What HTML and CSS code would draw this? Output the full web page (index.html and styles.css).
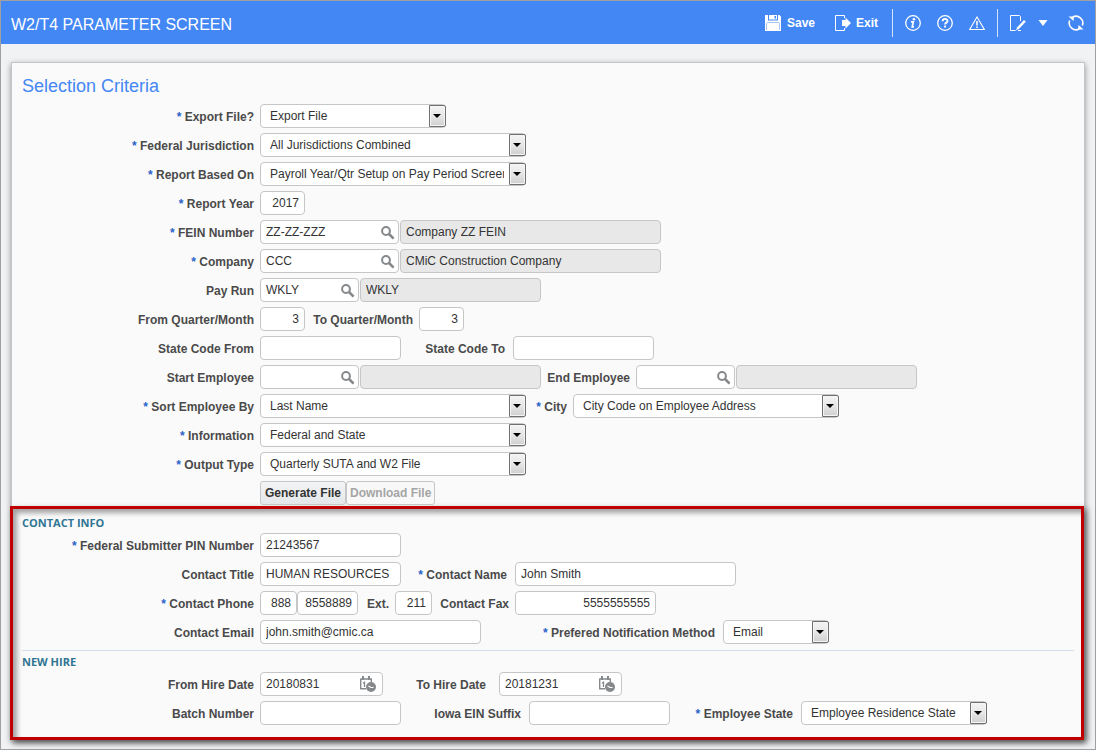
FILE: index.html
```html
<!DOCTYPE html>
<html lang="en">

<head>
    <meta charset="UTF-8">
    <meta name="viewport" content="width=device-width, initial-scale=1.0">
    <title>W2/T4 Parameter Screen</title>
    <link rel="stylesheet" href="styles.css">
</head>

<body>
    <!-- shared icons -->
    <svg class="sprite" aria-hidden="true">
        <symbol id="search" viewBox="0 0 14 14">
            <circle cx="5" cy="5" r="3.9" fill="none" stroke="#85898c" stroke-width="2" />
            <path d="M8 8l4.600 4.600" stroke="#85898c" stroke-width="2.600" />
        </symbol>
        <symbol id="calendar" viewBox="0 0 17 16">
            <path d="M.7 2.500v10.300H6M.7 3h10.600v3" fill="none" stroke="#85898c" stroke-width="1.400" />
            <path d="M2 0h2v4H2zM8 0h2v4H8z" fill="#85898c" />
            <path d="M3 7.200l1.500-1V11" fill="none" stroke="#85898c" stroke-width="1.300" />
            <circle cx="11" cy="11" r="5" fill="#85898c" />
            <path d="M8.500 10l2.500 1.500h2.500" fill="none" stroke="#fff" stroke-width="1.200" />
        </symbol>
    </svg>

    <div class="window">
        <header class="topbar">
            <h1>W2/T4 PARAMETER SCREEN</h1>
            <div class="toolbar">
                <button type="button" class="tool save">
                    <svg width="16" height="16" viewBox="0 0 16 16">
                        <path d="M0 0h3v5.500h10V0h1.500L16 1.500V7H0z" fill="#fff" />
                        <path d="M4 0h8v4.500H4z" fill="#fff" />
                        <path d="M9.500 1H11v2.500H9.500z" fill="#4387f5" />
                        <path d="M0 7h16v9H0z" fill="#fff" />
                        <path d="M1.500 8v7M14.500 8v7M2 7.500h12" stroke="#8fb7f9" stroke-width=".8" />
                    </svg>
                    Save
                </button>
                <button type="button" class="tool exit">
                    <svg width="16" height="16" viewBox="0 0 16 16">
                        <path d="M9.500 3V.5H.5v15h9V13" fill="none" stroke="#fff" />
                        <path d="M7 5h3.500V2.500L16 8l-5.500 5.500V11H7z" fill="#fff" />
                    </svg>
                    Exit
                </button>
                <span class="divider"></span>
                <button type="button" class="tool" aria-label="Info">
                    <svg width="16" height="16" viewBox="0 0 16 16">
                        <circle cx="8" cy="8" r="7.300" fill="none" stroke="#fff" stroke-width="1.300" />
                        <circle cx="8.900" cy="4.200" r="1.300" fill="#fff" />
                        <path d="M6 6.800h2.400l-1.200 5h1.800" fill="none" stroke="#fff" stroke-width="1.700" />
                    </svg>
                </button>
                <button type="button" class="tool" aria-label="Help">
                    <svg width="16" height="16" viewBox="0 0 16 16">
                        <circle cx="8" cy="8" r="7.300" fill="none" stroke="#fff" stroke-width="1.300" />
                        <path d="M5.600 6.300C5.600 3 10.600 3.200 10.500 6c0 1.700-2.400 1.600-2.400 3.500" fill="none" stroke="#fff" stroke-width="1.900" />
                        <path d="M7.100 10.600h2v1.900h-2z" fill="#fff" />
                    </svg>
                </button>
                <button type="button" class="tool" aria-label="Warnings">
                    <svg width="16" height="16" viewBox="0 0 16 16">
                        <path d="M8 2L15.300 14.500H.7z" fill="none" stroke="#fff" stroke-width="1.100" />
                        <path d="M7.200 6h1.600v4.500H7.200zM7.200 11.500h1.600V13H7.200z" fill="#fff" />
                    </svg>
                </button>
                <span class="divider"></span>
                <button type="button" class="tool edit" aria-label="Edit">
                    <svg width="16" height="16" viewBox="0 0 16 16">
                        <path d="M10.500 6V1.500L9.500.5h-9v15h5" fill="none" stroke="#fff" />
                        <path d="M14 5l1.800 1.800-7 7.200-2.800 1.500 1.200-3.200z" fill="#fff" />
                        <path d="M8 15.500h3" stroke="#fff" />
                    </svg>
                </button>
                <button type="button" class="tool caret" aria-label="More">
                    <svg width="10" height="6" viewBox="0 0 10 6">
                        <path d="M.5 0h9L5 6z" fill="#fff" />
                    </svg>
                </button>
                <button type="button" class="tool" aria-label="Refresh">
                    <svg width="16" height="16" viewBox="0 0 16 16">
                        <path d="M4.500 2.200A6.800 6.800 0 0 1 14.300 10.500M11.500 13.800A6.800 6.800 0 0 1 1.700 5.500" fill="none" stroke="#fff" stroke-width="1.600" />
                        <path d="M.5 1.500H6L5.500 6zM15.500 14.500H10l.5-4.500z" fill="#fff" />
                    </svg>
                </button>
            </div>
        </header>

        <main class="panel">
            <section class="criteria">
                <h2>Selection Criteria</h2>
                <div class="row">
                    <label class="first req" for="exportFile">Export File?</label>
                    <span class="select w186"><select id="exportFile"><option>Export File</option></select></span>
                </div>
                <div class="row">
                    <label class="first req" for="jurisdiction">Federal Jurisdiction</label>
                    <span class="select w266"><select id="jurisdiction"><option>All Jurisdictions Combined</option></select></span>
                </div>
                <div class="row">
                    <label class="first req" for="basedOn">Report Based On</label>
                    <span class="select w266"><select id="basedOn"><option>Payroll Year/Qtr Setup on Pay Period Screen</option></select></span>
                </div>
                <div class="row">
                    <label class="first req" for="year">Report Year</label>
                    <input type="text" id="year" class="num w45" value="2017">
                </div>
                <div class="row">
                    <label class="first req" for="fein">FEIN Number</label>
                    <span class="lookup w139"><input type="text" id="fein" value="ZZ-ZZ-ZZZ"><button type="button" aria-label="Search"><svg width="14" height="14"><use href="#search" /></svg></button></span>
                    <input type="text" class="desc w261" aria-label="FEIN name" value="Company ZZ FEIN" readonly>
                </div>
                <div class="row">
                    <label class="first req" for="company">Company</label>
                    <span class="lookup w139"><input type="text" id="company" value="CCC"><button type="button" aria-label="Search"><svg width="14" height="14"><use href="#search" /></svg></button></span>
                    <input type="text" class="desc w261" aria-label="Company name" value="CMiC Construction Company" readonly>
                </div>
                <div class="row">
                    <label class="first" for="payRun">Pay Run</label>
                    <span class="lookup w99"><input type="text" id="payRun" value="WKLY"><button type="button" aria-label="Search"><svg width="14" height="14"><use href="#search" /></svg></button></span>
                    <input type="text" class="desc w181" aria-label="Pay run name" value="WKLY" readonly>
                </div>
                <div class="row">
                    <label class="first" for="fromQtr">From Quarter/Month</label>
                    <input type="text" id="fromQtr" class="num w45" value="3">
                    <label class="toqtr" for="toQtr">To Quarter/Month</label>
                    <input type="text" id="toQtr" class="num w45" value="3">
                </div>
                <div class="row">
                    <label class="first" for="stateFrom">State Code From</label>
                    <input type="text" id="stateFrom" class="w141">
                    <label class="stateto" for="stateTo">State Code To</label>
                    <input type="text" id="stateTo" class="w141">
                </div>
                <div class="row">
                    <label class="first" for="startEmp">Start Employee</label>
                    <span class="lookup w99"><input type="text" id="startEmp"><button type="button" aria-label="Search"><svg width="14" height="14"><use href="#search" /></svg></button></span>
                    <input type="text" class="desc w181" aria-label="Start employee name" readonly>
                    <label class="endemp" for="endEmp">End Employee</label>
                    <span class="lookup w99"><input type="text" id="endEmp"><button type="button" aria-label="Search"><svg width="14" height="14"><use href="#search" /></svg></button></span>
                    <input type="text" class="desc w181" aria-label="End employee name" readonly>
                </div>
                <div class="row">
                    <label class="first req" for="sortBy">Sort Employee By</label>
                    <span class="select w266"><select id="sortBy"><option>Last Name</option></select></span>
                    <label class="city req" for="city">City</label>
                    <span class="select w266"><select id="city"><option>City Code on Employee Address</option></select></span>
                </div>
                <div class="row">
                    <label class="first req" for="information">Information</label>
                    <span class="select w266"><select id="information"><option>Federal and State</option></select></span>
                </div>
                <div class="row">
                    <label class="first req" for="output">Output Type</label>
                    <span class="select w266"><select id="output"><option>Quarterly SUTA and W2 File</option></select></span>
                </div>
                <div class="row buttons">
                    <button type="button" class="btn">Generate File</button>
                    <button type="button" class="btn" disabled>Download File</button>
                </div>
            </section>

            <div class="highlight">
                <section>
                    <h3>CONTACT INFO</h3>
                    <div class="row">
                        <label class="first req" for="pin">Federal Submitter PIN Number</label>
                        <input type="text" id="pin" class="w141" value="21243567">
                    </div>
                    <div class="row">
                        <label class="first" for="contactTitle">Contact Title</label>
                        <input type="text" id="contactTitle" class="w141" value="HUMAN RESOURCES">
                        <label class="name req" for="contactName">Contact Name</label>
                        <input type="text" id="contactName" class="w221" value="John Smith">
                    </div>
                    <div class="row">
                        <label class="first req" for="area">Contact Phone</label>
                        <input type="text" id="area" class="num w37" value="888">
                        <input type="text" class="num w61" aria-label="Phone number" value="8558889">
                        <label class="ext" for="ext">Ext.</label>
                        <input type="text" id="ext" class="num w37" value="211">
                        <label class="fax" for="fax">Contact Fax</label>
                        <input type="text" id="fax" class="num w141" value="5555555555">
                    </div>
                    <div class="row">
                        <label class="first" for="email">Contact Email</label>
                        <input type="text" id="email" class="w221" value="john.smith@cmic.ca">
                        <label class="notify req" for="notify">Prefered Notification Method</label>
                        <span class="select w106"><select id="notify"><option>Email</option></select></span>
                    </div>
                </section>
                <section class="newhire">
                    <h3>NEW HIRE</h3>
                    <div class="row">
                        <label class="first" for="fromHire">From Hire Date</label>
                        <span class="lookup date w123"><input type="text" id="fromHire" value="20180831"><button type="button" aria-label="Pick date"><svg width="17" height="16"><use href="#calendar" /></svg></button></span>
                        <label class="tohire" for="toHire">To Hire Date</label>
                        <span class="lookup date w123"><input type="text" id="toHire" value="20181231"><button type="button" aria-label="Pick date"><svg width="17" height="16"><use href="#calendar" /></svg></button></span>
                    </div>
                    <div class="row">
                        <label class="first" for="batch">Batch Number</label>
                        <input type="text" id="batch" class="w141">
                        <label class="iowa" for="iowa">Iowa EIN Suffix</label>
                        <input type="text" id="iowa" class="w141">
                        <label class="empstate req" for="empState">Employee State</label>
                        <span class="select w186"><select id="empState"><option>Employee Residence State</option></select></span>
                    </div>
                </section>
            </div>
        </main>
    </div>
</body>

</html>
```
FILE: styles.css
```css
*,
*::before,
*::after {
    margin: 0;
    padding: 0;
    box-sizing: border-box;
}

body,
input,
select,
button {
    font-family: "Liberation Sans", Arial, sans-serif;
    font-size: 12px;
    color: #333;
}

.sprite {
    display: none;
}

.window {
    min-height: 100vh;
    border: 1px solid #a0a0a0;
    background-color: #f1f2f4;
}

/* top bar */
.topbar {
    display: flex;
    align-items: center;
    justify-content: space-between;
    height: 43px;
    padding: 0 11px 0 10px;
    background-color: #4387f5;
}

.topbar h1 {
    padding-top: 4px;
    font-size: 16px;
    font-weight: normal;
    color: #fff;
}

.toolbar {
    display: flex;
    align-items: center;
    gap: 16px;
}

.tool {
    display: flex;
    align-items: center;
    gap: 6px;
    border: none;
    background: none;
    font-weight: bold;
    color: #fff;
    cursor: pointer;
}

.save {
    margin-right: 4px;
}

.exit {
    gap: 5px;
    margin-right: 2px;
}

.divider {
    width: 1px;
    height: 28px;
    margin: 0 -4px;
    background-color: #d4e2fb;
}

.edit {
    margin-right: -4px;
}

.caret {
    margin-right: 4px;
}

/* panel */
.panel {
    margin: 18px 10px 8px;
    border: 1px solid #c3c5c7;
    border-bottom: none;
    background-color: #fafafa;
    box-shadow: 0 2px 6px rgba(0, 0, 0, .4);
}

.criteria {
    padding: 12px 10px 1px;
}

.criteria h2 {
    margin-bottom: 7px;
    line-height: 22px;
    font-size: 18px;
    font-weight: normal;
    color: #4387f5;
}

.row {
    display: flex;
    height: 24px;
    margin-bottom: 5px;
}

.criteria .buttons {
    padding-left: 238px;
    margin-bottom: 0;
}

label {
    flex: none;
    margin-right: 6px;
    padding-top: 1px;
    line-height: 24px;
    text-align: right;
    font-weight: bold;
    color: #4a4a4a;
    white-space: nowrap;
}

.req::before {
    content: "* ";
    color: #2a62c9;
}

/* label columns */
.first { width: 232px; }
.toqtr { width: 108px; }
.stateto { width: 104px; margin-right: 8px; }
.endemp { width: 89px; }
.city { width: 41px; }
.name { width: 106px; margin-right: 8px; }
.ext { width: 31px; }
.fax { width: 77px; }
.notify { width: 234px; margin-right: 8px; }
.tohire { width: 103px; margin-right: 13px; }
.iowa { width: 120px; margin-right: 8px; }
.empstate { width: 123px; margin-right: 8px; }

/* fields */
input,
select {
    height: 24px;
    padding: 0 5px 1px;
    border: 1px solid #c4c6c8;
    border-radius: 4px;
    background-color: #fff;
}

.num {
    text-align: right;
}

.desc {
    margin-left: 1px;
    background-color: #e8e8e8;
}

.w37 { width: 37px; }
.w45 { width: 45px; }
.w61 { width: 61px; }
.w99 { width: 99px; }
.w106 { width: 106px; }
.w123 { width: 123px; }
.w139 { width: 139px; }
.w141 { width: 141px; }
.w181 { width: 181px; }
.w186 { width: 186px; }
.w221 { width: 221px; }
.w261 { width: 261px; }
.w266 { width: 266px; }

.select,
.lookup {
    position: relative;
}

.select select,
.lookup input {
    width: 100%;
}

.select select {
    appearance: none;
    padding: 0 21px 1px 9px;
}

/* drop-down button */
.select::before {
    content: "";
    position: absolute;
    top: 1px;
    right: 0;
    width: 17px;
    height: 22px;
    border: 1px solid #707070;
    border-radius: 0 2px 2px 0;
    background: linear-gradient(#f4f4f4, #e6e6e6 50%, #cfcfcf);
    box-shadow: inset 0 0 0 1px #f5f5f5;
    pointer-events: none;
}

.select::after {
    content: "";
    position: absolute;
    top: 10px;
    right: 5px;
    border: 4px solid transparent;
    border-top-color: #000;
    border-bottom: none;
    pointer-events: none;
}

.lookup input {
    padding-right: 24px;
}

.lookup button {
    position: absolute;
    top: 5px;
    right: 4px;
    height: 16px;
    border: none;
    background: none;
    cursor: pointer;
}

.lookup.date button {
    top: 4px;
    right: 6px;
}

.lookup svg {
    display: block;
}

.btn {
    min-width: 86px;
    padding: 0 3px;
    border: 1px solid #c4c6c8;
    border-radius: 3px;
    background: linear-gradient(#f3f4f5, #e4e7ea);
    font-weight: bold;
}

.btn:disabled {
    background: #f8f8f8;
    color: #a5a5a5;
}

/* outlined area */
.highlight {
    margin-left: -2px;
    padding: 6px 7px 7px 9px;
    border: 3px solid #c00000;
    box-shadow: 3px 3px 6px rgba(0, 0, 0, .5), inset 4px 4px 5px rgba(0, 0, 0, .35);
}

h3 {
    margin-bottom: 2px;
    line-height: 16px;
    font-family: "Open Sans", "Noto Sans", sans-serif;
    font-size: 11px;
    font-weight: bold;
    color: #2f7593;
}

.newhire {
    margin-top: 6px;
    padding-top: 3px;
    border-top: 1px solid #d3e0ec;
}
```
